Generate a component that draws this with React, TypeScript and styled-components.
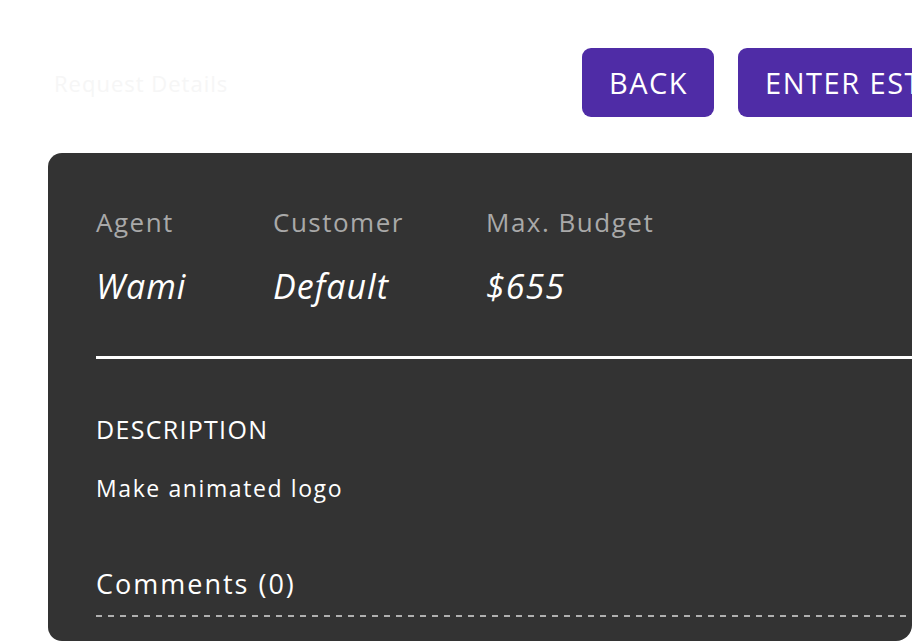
import React from 'react'
import styled, { createGlobalStyle } from 'styled-components'

const GlobalStyle = createGlobalStyle`
	html, body {
		margin: 0;
		padding: 0;
		background: #ffffff;
		overflow: hidden;
	}
	body {
		font-family: "Open Sans", "Liberation Sans", sans-serif;
	}
`

const Page = styled.div`
	width: 912px;
	height: 642px;
	padding: 48px 0 0 48px;
	box-sizing: border-box;
	display: flex;
	flex-direction: column;
	gap: 36px;
	overflow: hidden;
`

const Header = styled.div`
	display: flex;
	align-items: center;
	height: 69px;
	width: 1100px;
`

const PageTitle = styled.h1`
	margin: 0;
	padding-left: 6px;
	width: 534px;
	box-sizing: border-box;
	flex: none;
	font-size: 22px;
	font-weight: 500;
	color: #f6f6f6;
	letter-spacing: 1px;
`

const Actions = styled.div`
	display: flex;
	gap: 24px;
`

const Button = styled.button`
	height: 69px;
	padding: 0 26px 0 27px;
	border: none;
	border-radius: 9px;
	background: #4f2ca6;
	color: #ffffff;
	font-family: "Open Sans", "Liberation Sans", sans-serif;
	font-size: 29px;
	font-weight: 500;
	letter-spacing: 1.5px;
	white-space: nowrap;
`

const Panel = styled.section`
	width: 864px;
	height: 488px;
	background: #333333;
	border-radius: 14px 0 16px 14px;
	padding: 53px 0 0 48px;
	box-sizing: border-box;
	overflow: hidden;
`

const InfoRow = styled.div`
	display: flex;
`

const InfoColumn = styled.div<{ $width: number }>`
	width: ${(p) => p.$width}px;
	flex: none;
	display: flex;
	flex-direction: column;
	gap: 28px;
`

const Label = styled.div`
	font-size: 26px;
	letter-spacing: 1.5px;
	color: #a9a9a9;
	line-height: 32px;
	white-space: nowrap;
`

const Value = styled.div`
	font-size: 34px;
	font-style: italic;
	font-weight: 500;
	letter-spacing: 1px;
	color: #ffffff;
	line-height: 40px;
	white-space: nowrap;
`

const Divider = styled.hr`
	margin: 50px 0 0 0;
	border: none;
	height: 3px;
	background: #ffffff;
`

const SectionTitle = styled.h2`
	margin: 54px 0 0 0;
	font-size: 25px;
	font-weight: 500;
	letter-spacing: 1.3px;
	color: #ffffff;
	line-height: 32px;
`

const Description = styled.p`
	margin: 28px 0 0 0;
	font-size: 23px;
	letter-spacing: 1.6px;
	color: #ffffff;
	line-height: 30px;
`

const Comments = styled.h3`
	margin: 64px 0 0 0;
	font-size: 27px;
	font-weight: 400;
	letter-spacing: 2px;
	color: #ffffff;
	line-height: 34px;
	padding-bottom: 16px;
	background-image: linear-gradient(to right, #b0b0b0 0 6px, transparent 6px 12px);
	background-size: 12px 2px;
	background-repeat: repeat-x;
	background-position: left bottom;
`

const info = [
	{ label: 'Agent', value: 'Wami', width: 177 },
	{ label: 'Customer', value: 'Default', width: 213 },
	{ label: 'Max. Budget', value: '$655', width: 200 },
]

export default function App() {
	return (
		<>
			<GlobalStyle />
			<Page>
				<Header>
					<PageTitle>Request Details</PageTitle>
					<Actions>
						<Button>BACK</Button>
						<Button>ENTER ESTIMATE</Button>
					</Actions>
				</Header>
				<Panel>
					<InfoRow>
						{info.map((i) => (
							<InfoColumn key={i.label} $width={i.width}>
								<Label>{i.label}</Label>
								<Value>{i.value}</Value>
							</InfoColumn>
						))}
					</InfoRow>
					<Divider />
					<SectionTitle>DESCRIPTION</SectionTitle>
					<Description>Make animated logo</Description>
					<Comments>Comments (0)</Comments>
				</Panel>
			</Page>
		</>
	)
}
